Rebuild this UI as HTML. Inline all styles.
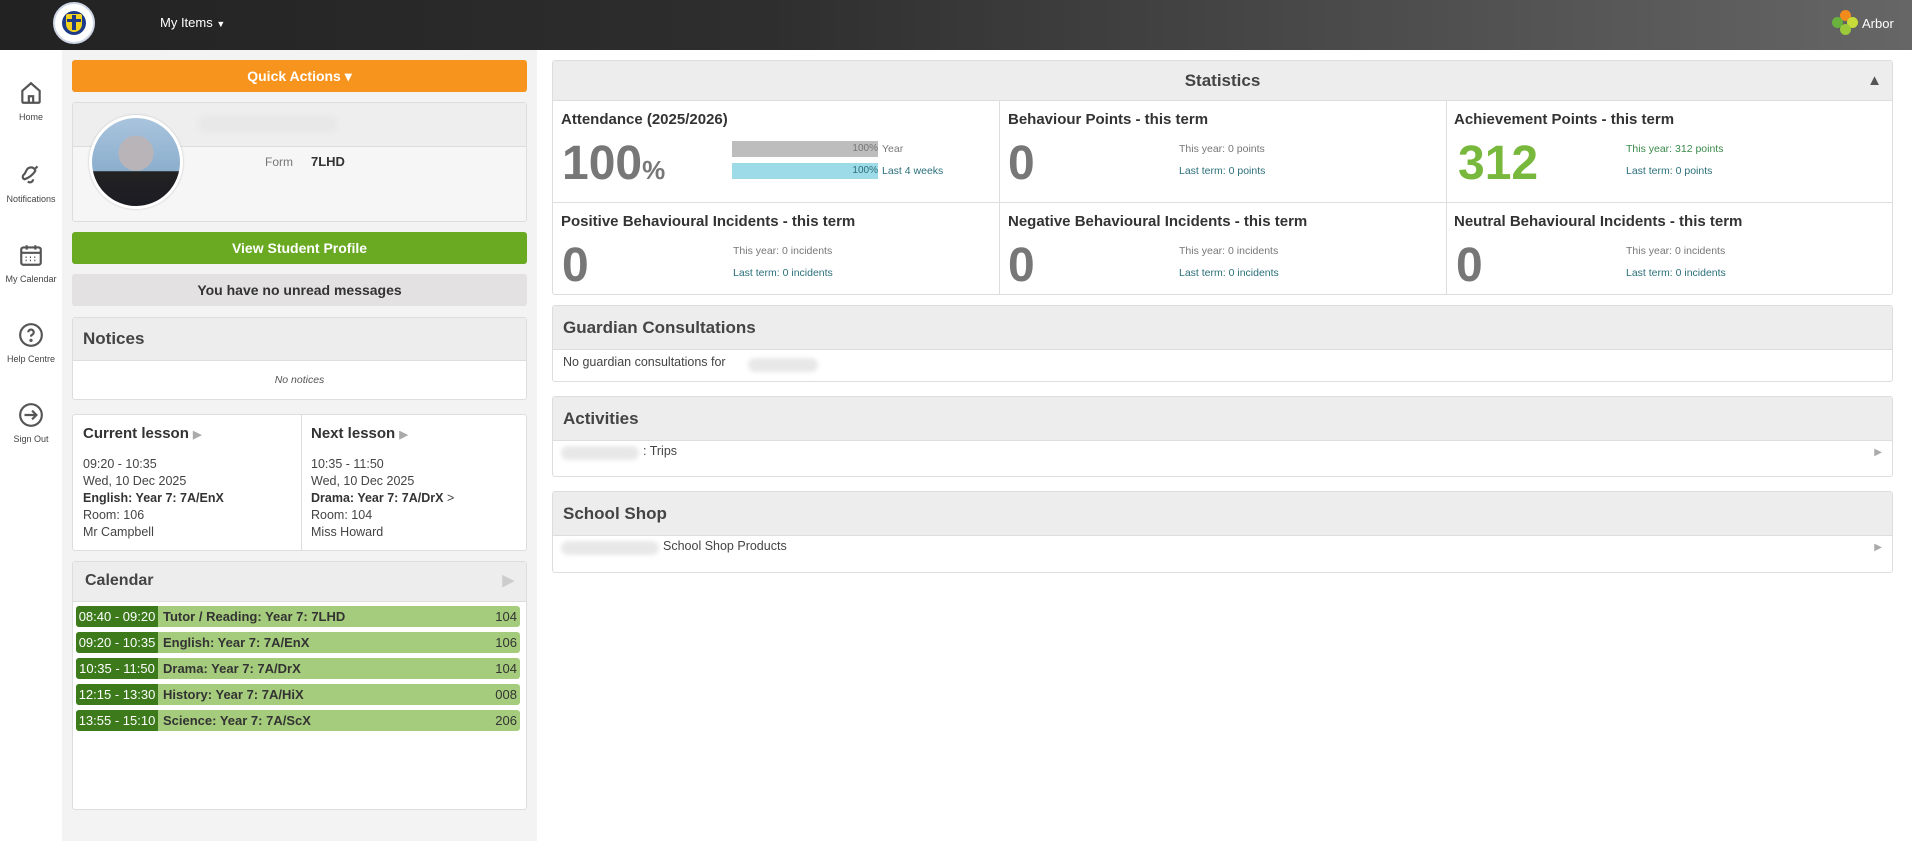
<!DOCTYPE html>
<html><head><meta charset="utf-8"><style>
*{box-sizing:border-box;margin:0;padding:0}
body{width:1912px;height:841px;overflow:hidden;background:#fff;font-family:"Liberation Sans",sans-serif;color:#333;position:relative}
.a{position:absolute}
#hdr{left:0;top:0;width:1912px;height:50px;background:linear-gradient(90deg,#222 0%,#2e2e2e 40%,#666 100%)}
#side{left:0;top:50px;width:62px;height:791px;background:#fff}
#lcol{left:62px;top:50px;width:475px;height:791px;background:#f4f3f3}
.nav{position:absolute;left:0;width:62px;text-align:center;font-size:9px;color:#444}
.nav svg{display:block;margin:0 auto 6px}
.box{position:absolute;border:1px solid #ddd;border-radius:3px;background:#fff}
.bh{background:#eeeded;border-bottom:1px solid #ddd;font-weight:bold;color:#444}
.sm{font-size:10.5px;color:#777}
.lk{color:#2a6f7a}
.big{font-size:48px;font-weight:bold;color:#777;line-height:1}
.st{position:absolute;font-size:15px;font-weight:bold;color:#333}
.row{position:absolute;left:76px;width:444px;height:21px;background:#a5cc7c;border-radius:3px;font-size:13px;font-weight:bold;color:#333;line-height:21px;overflow:hidden}
.row b{display:inline-block;width:82px;background:#3c7a1c;color:#fff;text-align:center;font-weight:normal;margin-right:5px}
.row i{position:absolute;right:3px;font-style:normal;font-weight:normal}
.blur{position:absolute;background:#e8e8e8;border-radius:10px;filter:blur(2px)}
</style></head><body>
<div id="hdr" class="a">
 <div class="a" style="left:53px;top:2px;width:42px;height:42px;border-radius:50%;background:#fff;border:2px solid #cfd6e6"><div class="a" style="left:7px;top:7px;width:24px;height:24px;border-radius:50%;background:#1e3b8a"></div><div class="a" style="left:11px;top:10px;width:16px;height:18px;background:#f2d21c;border-radius:2px 2px 8px 8px"></div><div class="a" style="left:17px;top:11px;width:4px;height:15px;background:#1e3b8a"></div><div class="a" style="left:12px;top:15px;width:14px;height:3px;background:#1e3b8a"></div></div>
 <div class="a" style="left:160px;top:15px;color:#fff;font-size:13px">My Items <span style="font-size:9px">&#9660;</span></div>
 <div class="a" style="left:1832px;top:10px;width:26px;height:26px">
  <div class="a" style="left:8px;top:0;width:11px;height:11px;border-radius:50%;background:#f28a1c"></div>
  <div class="a" style="left:0;top:7px;width:11px;height:11px;border-radius:50%;background:#6ab23e"></div>
  <div class="a" style="left:15px;top:7px;width:11px;height:11px;border-radius:50%;background:#c7dc3a"></div>
  <div class="a" style="left:8px;top:14px;width:11px;height:11px;border-radius:50%;background:#9cc93a"></div>
 </div>
 <div class="a" style="left:1862px;top:16px;color:#fff;font-size:13px">Arbor</div>
</div>
<div id="side" class="a">
 <div class="nav" style="top:30px"><svg width="26" height="26" viewBox="0 0 24 24" fill="none" stroke="#555" stroke-width="2"><path d="M4 10l8-7 8 7v10a1 1 0 0 1-1 1H5a1 1 0 0 1-1-1z"/><path d="M10 21v-6h4v6"/></svg>Home</div>
 <div class="nav" style="top:112px"><svg width="26" height="26" viewBox="0 0 24 24" fill="none" stroke="#555" stroke-width="2"><path d="M6 16c3-1 8-4 10-8-1-3-4-4-7-2-2 2-2 5-4 6-1 1-1 3 1 4z"/><path d="M9 18a3 3 0 0 0 5-2"/><path d="M16 6l2-2"/></svg>Notifications</div>
 <div class="nav" style="top:192px"><svg width="26" height="26" viewBox="0 0 24 24" fill="none" stroke="#555" stroke-width="2"><rect x="3" y="5" width="18" height="16" rx="2"/><path d="M3 10h18M8 3v4M16 3v4"/><path d="M7 14h1M11 14h1M15 14h1M7 17h1M11 17h1M15 17h1" stroke-width="1.5"/></svg>My Calendar</div>
 <div class="nav" style="top:272px"><svg width="26" height="26" viewBox="0 0 24 24" fill="none" stroke="#555" stroke-width="2"><circle cx="12" cy="12" r="10"/><path d="M9.5 9.5a2.5 2.5 0 1 1 3.5 2.3c-.7.4-1 .9-1 1.7"/><circle cx="12" cy="17" r=".5" fill="#555"/></svg>Help Centre</div>
 <div class="nav" style="top:352px"><svg width="26" height="26" viewBox="0 0 24 24" fill="none" stroke="#555" stroke-width="2"><circle cx="12" cy="12" r="10"/><path d="M6 12h11M13 8l4 4-4 4"/></svg>Sign Out</div>
</div>
<div id="lcol" class="a"></div>
<div class="a" style="left:72px;top:60px;width:455px;height:32px;background:#f7941d;border-radius:3px;color:#fff;font-weight:bold;font-size:14px;text-align:center;line-height:32px">Quick Actions &#9662;</div>
<div class="box" style="left:72px;top:102px;width:455px;height:120px;background:#f7f6f6">
 <div style="height:44px;background:#efeeee;border-bottom:1px solid #ddd"></div>
 <div class="blur" style="left:125px;top:12px;width:140px;height:18px"></div>
 <div class="a" style="left:16px;top:12px;width:94px;height:94px;border-radius:50%;border:3px solid #fff;box-shadow:0 0 2px #bbb;background:radial-gradient(circle at 50% 40%,#b9b4b8 0 25%,transparent 26%),linear-gradient(180deg,#a9c4dd 0%,#8cafce 60%,#222 61%,#1c1c24 100%)"></div>
 <div class="a" style="left:192px;top:52px;font-size:12px;color:#777">Form</div>
 <div class="a" style="left:238px;top:51px;font-size:13px;font-weight:bold;color:#333">7LHD</div>
</div>
<div class="a" style="left:72px;top:232px;width:455px;height:32px;background:#6aaa23;border-radius:3px;color:#fff;font-weight:bold;font-size:14px;text-align:center;line-height:32px">View Student Profile</div>
<div class="a" style="left:72px;top:274px;width:455px;height:32px;background:#e3e1e1;border-radius:3px;color:#333;font-weight:bold;font-size:14px;text-align:center;line-height:32px">You have no unread messages</div>
<div class="box" style="left:72px;top:317px;width:455px;height:83px">
 <div class="bh" style="height:43px;font-size:17px;padding:11px 10px">Notices</div>
 <div style="text-align:center;font-size:10.5px;font-style:italic;color:#555;padding-top:13px">No notices</div>
</div>
<div class="box" style="left:72px;top:414px;width:455px;height:137px">
 <div class="a" style="left:228px;top:0;width:1px;height:135px;background:#ddd"></div>
 <div class="a" style="left:10px;top:10px;font-size:15px;font-weight:bold;color:#333">Current lesson <span style="color:#aaa;font-size:11px">&#9654;</span></div>
 <div class="a" style="left:10px;top:41px;font-size:12.5px;line-height:17px;color:#444">09:20 - 10:35<br>Wed, 10 Dec 2025<br><b style="color:#333">English: Year 7: 7A/EnX</b><br>Room: 106<br>Mr Campbell</div>
 <div class="a" style="left:238px;top:10px;font-size:15px;font-weight:bold;color:#333">Next lesson <span style="color:#aaa;font-size:11px">&#9654;</span></div>
 <div class="a" style="left:238px;top:41px;font-size:12.5px;line-height:17px;color:#444">10:35 - 11:50<br>Wed, 10 Dec 2025<br><b style="color:#333">Drama: Year 7: 7A/DrX</b> &gt;<br>Room: 104<br>Miss Howard</div>
</div>
<div class="box" style="left:72px;top:561px;width:455px;height:249px">
 <div class="bh" style="height:40px;font-size:16px;padding:10px 12px">Calendar<span style="position:absolute;right:12px;top:9px;color:#ccc;font-size:15px">&#9654;</span></div>
</div>
<div class="row" style="top:606px"><b>08:40 - 09:20</b>Tutor / Reading: Year 7: 7LHD<i>104</i></div>
<div class="row" style="top:632px"><b>09:20 - 10:35</b>English: Year 7: 7A/EnX<i>106</i></div>
<div class="row" style="top:658px"><b>10:35 - 11:50</b>Drama: Year 7: 7A/DrX<i>104</i></div>
<div class="row" style="top:684px"><b>12:15 - 13:30</b>History: Year 7: 7A/HiX<i>008</i></div>
<div class="row" style="top:710px"><b>13:55 - 15:10</b>Science: Year 7: 7A/ScX<i>206</i></div>

<div class="box" style="left:552px;top:60px;width:1341px;height:235px">
 <div class="bh" style="height:40px;font-size:17px;text-align:center;line-height:39px">Statistics<span style="position:absolute;right:10px;top:0;color:#555;font-size:15px">&#9650;</span></div>
 <div class="a" style="left:446px;top:40px;width:1px;height:193px;background:#ddd"></div>
 <div class="a" style="left:893px;top:40px;width:1px;height:193px;background:#ddd"></div>
 <div class="a" style="left:0;top:141px;width:1339px;height:1px;background:#ddd"></div>
</div>
<div class="st" style="left:561px;top:111px">Attendance (2025/2026)</div>
<div class="big a" style="left:562px;top:140px">100<span style="font-size:26px">%</span></div>
<div class="a" style="left:732px;top:141px;width:146px;height:16px;background:#bdbdbd;font-size:10px;color:#777;text-align:right;line-height:16px">100%</div>
<div class="a sm" style="left:882px;top:143px">Year</div>
<div class="a" style="left:732px;top:163px;width:146px;height:16px;background:#9edbe9;font-size:10px;color:#2a6f7a;text-align:right;line-height:16px">100%</div>
<div class="a sm lk" style="left:882px;top:165px">Last 4 weeks</div>
<div class="st" style="left:1008px;top:111px">Behaviour Points - this term</div>
<div class="big a" style="left:1008px;top:140px">0</div>
<div class="a sm" style="left:1179px;top:143px">This year: 0 points</div>
<div class="a sm lk" style="left:1179px;top:165px">Last term: 0 points</div>
<div class="st" style="left:1454px;top:111px">Achievement Points - this term</div>
<div class="big a" style="left:1458px;top:140px;color:#78b83c">312</div>
<div class="a sm" style="left:1626px;top:143px;color:#3a8a4a">This year: 312 points</div>
<div class="a sm lk" style="left:1626px;top:165px">Last term: 0 points</div>
<div class="st" style="left:561px;top:213px">Positive Behavioural Incidents - this term</div>
<div class="big a" style="left:562px;top:242px">0</div>
<div class="a sm" style="left:733px;top:245px">This year: 0 incidents</div>
<div class="a sm lk" style="left:733px;top:267px">Last term: 0 incidents</div>
<div class="st" style="left:1008px;top:213px">Negative Behavioural Incidents - this term</div>
<div class="big a" style="left:1008px;top:242px">0</div>
<div class="a sm" style="left:1179px;top:245px">This year: 0 incidents</div>
<div class="a sm lk" style="left:1179px;top:267px">Last term: 0 incidents</div>
<div class="st" style="left:1454px;top:213px">Neutral Behavioural Incidents - this term</div>
<div class="big a" style="left:1456px;top:242px">0</div>
<div class="a sm" style="left:1626px;top:245px">This year: 0 incidents</div>
<div class="a sm lk" style="left:1626px;top:267px">Last term: 0 incidents</div>

<div class="box" style="left:552px;top:305px;width:1341px;height:77px">
 <div class="bh" style="height:44px;font-size:17px;padding:12px 10px">Guardian Consultations</div>
 <div style="font-size:12.5px;color:#444;padding:5px 10px">No guardian consultations for</div>
 <div class="blur" style="left:195px;top:52px;width:70px;height:14px"></div>
</div>
<div class="box" style="left:552px;top:396px;width:1341px;height:81px">
 <div class="bh" style="height:44px;font-size:17px;padding:12px 10px">Activities</div>
 <div style="font-size:12.5px;color:#444;padding:3px 0 0 90px">: Trips</div>
 <div class="blur" style="left:8px;top:49px;width:78px;height:14px"></div>
 <div class="a" style="right:10px;top:50px;color:#aaa;font-size:10px">&#9654;</div>
</div>
<div class="box" style="left:552px;top:491px;width:1341px;height:82px">
 <div class="bh" style="height:44px;font-size:17px;padding:12px 10px">School Shop</div>
 <div style="font-size:12.5px;color:#444;padding:3px 0 0 110px">School Shop Products</div>
 <div class="blur" style="left:8px;top:49px;width:98px;height:14px"></div>
 <div class="a" style="right:10px;top:50px;color:#aaa;font-size:10px">&#9654;</div>
</div>
</body></html>
